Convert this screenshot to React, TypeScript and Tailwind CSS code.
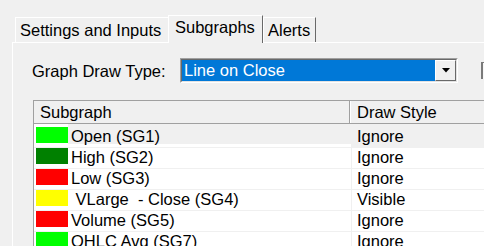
import React from 'react';

type Row = { color: string; name: string; style: string };

const rows: Row[] = [
    { color: 'bg-[#00ff00]', name: 'Open (SG1)', style: 'Ignore' },
    { color: 'bg-[#008000]', name: 'High (SG2)', style: 'Ignore' },
    { color: 'bg-[#ff0000]', name: 'Low (SG3)', style: 'Ignore' },
    { color: 'bg-[#ffff00]', name: ' VLarge  - Close (SG4)', style: 'Visible' },
    { color: 'bg-[#ff0000]', name: 'Volume (SG5)', style: 'Ignore' },
    { color: 'bg-[#00ff00]', name: 'OHLC Avg (SG7)', style: 'Ignore' },
];

function Tab({ label, active, className }: { label: string; active?: boolean; className: string }) {
    return (
        <div
            className={
                active
                    ? `h-[28px] mb-[-1px] border-t border-l border-white border-r border-r-[#696969] bg-[#f0f0f0] pl-[6px] pt-[2px] leading-[18px] whitespace-nowrap ${className}`
                    : `h-[25px] border-t border-l border-white bg-[#f0f0f0] pl-[4px] pt-[3px] leading-[18px] whitespace-nowrap ${className}`
            }
        >
            {label}
        </div>
    );
}

export default function App() {
    return (
        <div className="w-[484px] h-[246px] overflow-hidden bg-[#f0f0f0] text-black text-[16.5px] font-['Liberation_Sans',Arial,sans-serif]">
            <div className="pl-[12px] pt-[15px]">
                {/* Tab strip */}
                <div className="relative z-10 flex items-end h-[27px] pl-[3px]">
                    <Tab label="Settings and Inputs" className="w-[153px]" />
                    <Tab label="Subgraphs" active className="w-[95px]" />
                    <Tab label="Alerts" className="w-[53px] border-r border-r-[#696969]" />
                </div>

                {/* Tab page */}
                <div className="w-[600px] h-[300px] border-t border-l border-white pt-[15px] pl-[19px]">
                    <div className="flex items-center h-[25px]">
                        <span className="w-[148px] leading-[18px] whitespace-nowrap">Graph Draw Type:</span>
                        <div className="w-[278px] h-[25px] border border-[#a0a0a0] border-b-white border-r-white">
                            <div className="flex h-full border border-[#696969] border-b-[#e3e3e3] border-r-[#e3e3e3]">
                                <div className="flex-1 bg-[#0078d7] text-white pl-[2px] leading-[21px]">Line on Close</div>
                                <div className="w-[21px] flex items-center justify-center bg-[#f0f0f0] border border-white border-r-[#696969] border-b-[#696969]">
                                    <svg width="8" height="5" viewBox="0 0 8 5">
                                        <path d="M0 0h8L4 4.5z" fill="#000" />
                                    </svg>
                                </div>
                            </div>
                        </div>
                        <div className="ml-[23px] w-[16px] h-[17px] border-l-2 border-t border-[#7a7a7a] bg-[#f7f7f7]" />
                    </div>

                    {/* Subgraph list */}
                    <div className="mt-[17px] ml-[1px] w-[700px] border-t border-l border-[#a0a0a0] bg-white">
                        <div className="flex h-[23px] border-b border-[#a0a0a0] bg-[#f0f0f0] leading-[18px]">
                            <div className="w-[316px] border-r border-[#a0a0a0] pl-[6px] pt-[2px]">Subgraph</div>
                            <div className="flex-1 border-l border-white pl-[6px] pt-[2px]">Draw Style</div>
                        </div>
                        {rows.map((r, i) => (
                            <div
                                key={i}
                                className={`flex leading-[18px] ${i === 0 ? 'h-[23px]' : 'h-[21px] border-t border-[#f0f0f0]'}`}
                            >
                                <div className={`w-[317px] flex items-start ${i === 0 ? 'pt-[3px]' : ''}`}>
                                    <div className={`ml-[2px] w-[32px] h-[16px] shrink-0 ${r.color}`} />
                                    <div className={`flex-1 h-full whitespace-pre pl-[3px] ${i === 0 ? 'bg-[#f0f0f0] mt-[-3px] pt-[3px] h-[23px]' : ''}`}>
                                        {r.name}
                                    </div>
                                </div>
                                <div className={`flex-1 border-l border-[#f0f0f0] pl-[5px] ${i === 0 ? 'bg-[#f0f0f0] pt-[3px]' : ''}`}>
                                    {r.style}
                                </div>
                            </div>
                        ))}
                    </div>
                </div>
            </div>
        </div>
    );
}
